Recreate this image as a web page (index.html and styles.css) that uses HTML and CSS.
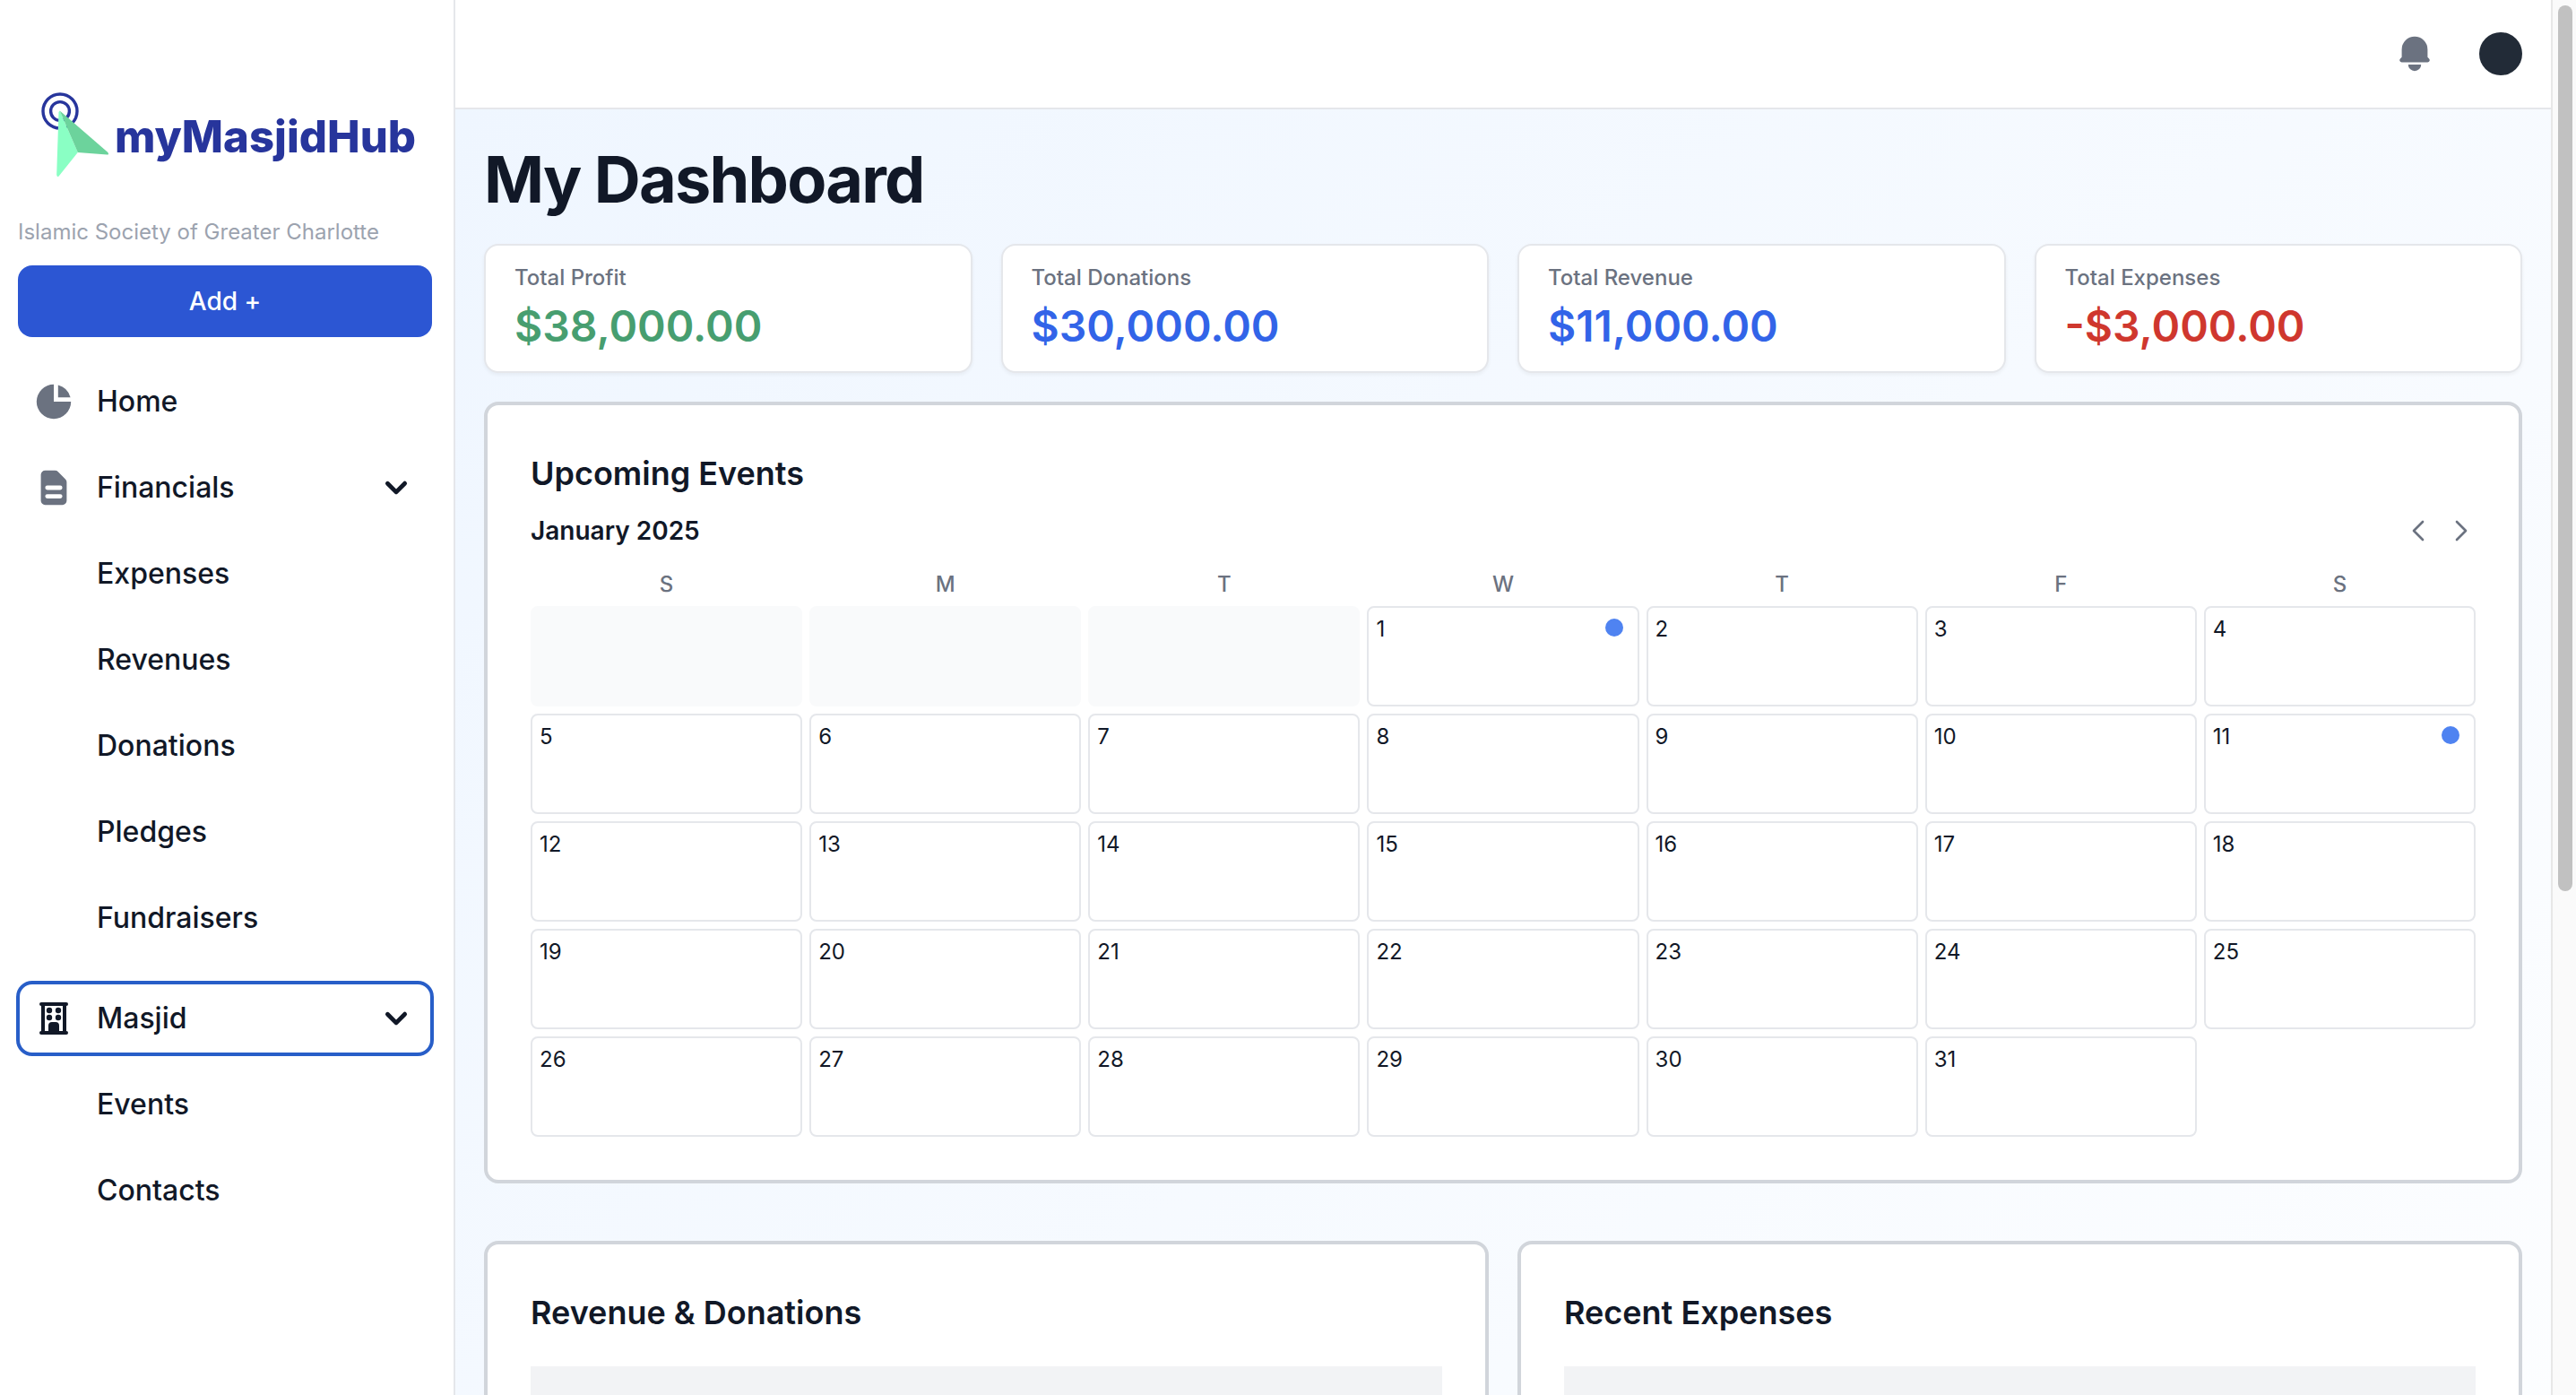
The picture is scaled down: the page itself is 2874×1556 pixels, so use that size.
FILE: index.html
```html
<!DOCTYPE html>
<html lang="en">
<head>
<meta charset="utf-8">
<meta name="viewport" content="width=device-width, initial-scale=1">
<title>My Dashboard - myMasjidHub</title>
<link rel="stylesheet" href="styles.css">
</head>
<body>
<div class="app">
  <aside class="sidebar">
    <a class="logo" href="#">
      <svg class="logo-mark" viewBox="0 0 78 102" fill="none" aria-hidden="true">
        <circle cx="21" cy="22" r="19" stroke="#27359c" stroke-width="3.4"/>
        <circle cx="21" cy="22" r="10.4" stroke="#27359c" stroke-width="3.4"/>
        <path d="M20.7 21.5L40.8 68 19.600 94.400Q17.300 96 17.200 92.800L19.500 23Z" fill="#8affc4"/>
        <path d="M20.700 21.500L74.400 68Q76 70.600 73.500 70.600L40.800 68Z" fill="#6cd39c"/>
      </svg>
      <span class="logo-text">myMasjidHub</span>
    </a>
    <p class="org">Islamic Society of Greater Charlotte</p>
    <button class="add" type="button">Add +</button>
    <nav aria-label="Main">
      <ul class="menu">
        <li><a class="item" href="#">
          <svg class="icon muted" viewBox="0 0 20 20" aria-hidden="true"><path d="M2 10a8 8 0 018-8v8h8a8 8 0 11-16 0z"/><path d="M12 2.252A8.014 8.014 0 0117.748 8H12V2.252z"/></svg>
          <span>Home</span></a></li>
        <li>
          <button class="item" type="button" aria-expanded="true">
            <svg class="icon muted" viewBox="0 0 20 20" aria-hidden="true"><path fill-rule="evenodd" clip-rule="evenodd" d="M4 4a2 2 0 012-2h4.586A2 2 0 0112 2.586L15.414 6A2 2 0 0116 7.414V16a2 2 0 01-2 2H6a2 2 0 01-2-2V4zm2 6a1 1 0 011-1h6a1 1 0 110 2H7a1 1 0 01-1-1zm1 3a1 1 0 100 2h6a1 1 0 100-2H7z"/></svg>
            <span class="grow">Financials</span>
            <svg class="icon" viewBox="0 0 20 20" aria-hidden="true"><path fill-rule="evenodd" d="M5.293 7.293a1 1 0 011.414 0L10 10.586l3.293-3.293a1 1 0 111.414 1.414l-4 4a1 1 0 01-1.414 0l-4-4a1 1 0 010-1.414z"/></svg>
          </button>
          <ul class="submenu">
            <li><a class="item sub" href="#">Expenses</a></li>
            <li><a class="item sub" href="#">Revenues</a></li>
            <li><a class="item sub" href="#">Donations</a></li>
            <li><a class="item sub" href="#">Pledges</a></li>
            <li><a class="item sub" href="#">Fundraisers</a></li>
          </ul>
        </li>
        <li>
          <button class="item focused" type="button" aria-expanded="true">
            <svg class="icon" viewBox="0 0 48 48" aria-hidden="true"><rect x="8" y="6" width="32" height="4" rx="2"/><rect x="8" y="38" width="32" height="4" rx="2"/><path d="M10 8h4v32h-4zM34 8h4v32h-4zM18 40v-8a4 4 0 014-4h4a4 4 0 014 4v8z"/><circle cx="19" cy="15" r="3.200"/><circle cx="29" cy="15" r="3.200"/><circle cx="19" cy="23" r="3.200"/><circle cx="29" cy="23" r="3.200"/></svg>
            <span class="grow">Masjid</span>
            <svg class="icon" viewBox="0 0 20 20" aria-hidden="true"><path fill-rule="evenodd" d="M5.293 7.293a1 1 0 011.414 0L10 10.586l3.293-3.293a1 1 0 111.414 1.414l-4 4a1 1 0 01-1.414 0l-4-4a1 1 0 010-1.414z"/></svg>
          </button>
          <ul class="submenu">
            <li><a class="item sub" href="#">Events</a></li>
            <li><a class="item sub" href="#">Contacts</a></li>
          </ul>
        </li>
      </ul>
    </nav>
  </aside>

  <div class="page">
    <header class="topbar">
      <button class="icon-button" type="button" aria-label="Notifications">
        <svg class="icon muted" viewBox="0 0 20 20" aria-hidden="true"><path d="M10 2a6 6 0 00-6 6v3.586l-.707.707A1 1 0 004 14h12a1 1 0 00.707-1.707L16 11.586V8a6 6 0 00-6-6zM10 18a3 3 0 01-3-3h6a3 3 0 01-3 3z"/></svg>
      </button>
      <button class="avatar" type="button" aria-label="Account"></button>
    </header>
    <main class="content">
      <h1>My Dashboard</h1>
      <section class="stats" aria-label="Totals">
        <div class="stat"><p class="stat-label">Total Profit</p><p class="stat-value green">$38,000.00</p></div>
        <div class="stat"><p class="stat-label">Total Donations</p><p class="stat-value blue">$30,000.00</p></div>
        <div class="stat"><p class="stat-label">Total Revenue</p><p class="stat-value blue">$11,000.00</p></div>
        <div class="stat"><p class="stat-label">Total Expenses</p><p class="stat-value red">-$3,000.00</p></div>
      </section>

      <section class="panel">
        <h2>Upcoming Events</h2>
        <div class="month">
          <h3>January 2025</h3>
          <div class="month-nav">
            <button class="icon-button" type="button" aria-label="Previous month"><svg class="arrow" viewBox="0 0 24 24" aria-hidden="true"><path d="M15.750 19.500L8.250 12l7.500-7.500"/></svg></button>
            <button class="icon-button" type="button" aria-label="Next month"><svg class="arrow" viewBox="0 0 24 24" aria-hidden="true"><path d="M8.250 4.500l7.500 7.500-7.500 7.500"/></svg></button>
          </div>
        </div>
        <table class="calendar">
          <thead><tr><th>S</th><th>M</th><th>T</th><th>W</th><th>T</th><th>F</th><th>S</th></tr></thead>
          <tbody>
            <tr><td class="blank"></td><td class="blank"></td><td class="blank"></td><td>1<span class="dot"></span></td><td>2</td><td>3</td><td>4</td></tr>
            <tr><td>5</td><td>6</td><td>7</td><td>8</td><td>9</td><td>10</td><td>11<span class="dot"></span></td></tr>
            <tr><td>12</td><td>13</td><td>14</td><td>15</td><td>16</td><td>17</td><td>18</td></tr>
            <tr><td>19</td><td>20</td><td>21</td><td>22</td><td>23</td><td>24</td><td>25</td></tr>
            <tr><td>26</td><td>27</td><td>28</td><td>29</td><td>30</td><td>31</td></tr>
          </tbody>
        </table>
      </section>

      <div class="pair">
        <section class="panel"><h2>Revenue &amp; Donations</h2><div class="placeholder"></div></section>
        <section class="panel"><h2>Recent Expenses</h2><div class="placeholder"></div></section>
      </div>
    </main>
  </div>

  <div class="scrollbar" aria-hidden="true"><div class="thumb"></div></div>
</div>
</body>
</html>
```

FILE: styles.css
```css
*, *::before, *::after { box-sizing: border-box; }

body {
  margin: 0;
  background: #fff;
  color: #111827;
  font: 400 24px/32px Inter, "Liberation Sans", sans-serif;
}

h1, h2, h3, p, ul { margin: 0; padding: 0; }
ul { list-style: none; }
a { color: inherit; text-decoration: none; }
button { margin: 0; padding: 0; border: 0; background: none; color: inherit; font: inherit; cursor: pointer; }
svg { display: block; flex: none; }

.app { display: flex; height: 100vh; overflow: hidden; }

/* Sidebar */
.sidebar {
  flex: none;
  width: 508px;
  padding: 102px 24px 32px 20px;
  border-right: 2px solid #e5e7eb;
  background: #fff;
}
.logo { display: flex; align-items: center; gap: 4px; padding-left: 26px; }
.logo-mark { width: 78px; height: 102px; }
.logo-text { color: #27359c; font-size: 49px; font-weight: 800; line-height: 64px; }
.org { margin: 39px 0 21px; color: #9ca3af; }
.add {
  width: 100%;
  height: 80px;
  border-radius: 16px;
  background: #2c56d3;
  color: #fff;
  font-size: 28px;
  font-weight: 500;
}
.menu { display: grid; gap: 16px; margin-top: 32px; }
.submenu { display: grid; gap: 16px; padding: 16px 0; }
.item {
  display: flex;
  align-items: center;
  gap: 24px;
  width: 100%;
  height: 80px;
  padding: 0 16px;
  border-radius: 16px;
  font-size: 32px;
  font-weight: 500;
  text-align: left;
}
.sub { padding-left: 88px; }
.focused { outline: 4px solid #285ec8; outline-offset: -2px; }
.grow { flex: 1; }
.icon { width: 48px; height: 48px; fill: currentColor; }
.muted { color: #6b7280; }

/* Page */
.page { flex: 1; min-width: 0; display: flex; flex-direction: column; }
.topbar {
  flex: none;
  display: flex;
  justify-content: flex-end;
  align-items: center;
  gap: 48px;
  padding: 36px 32px;
  border-bottom: 2px solid #e5e7eb;
  background: #fff;
}
.avatar { width: 48px; height: 48px; border-radius: 50%; background: #222b37; }
.content {
  flex: none;
  padding: 38px 32px 32px;
  background: linear-gradient(to bottom right, #eff6ff, #fff);
}
h1 { margin-bottom: 32px; font-size: 72px; font-weight: 700; line-height: 80px; letter-spacing: -0.025em; }
h2 { font-size: 36px; font-weight: 600; line-height: 56px; }
h3 { font-size: 28px; font-weight: 600; line-height: 40px; }

.stats { display: grid; grid-template-columns: repeat(4, 1fr); gap: 32px; margin-bottom: 32px; }
.stat {
  padding: 16px 32px;
  border: 2px solid #e5e7eb;
  border-radius: 16px;
  background: #fff;
  box-shadow: 0 2px 4px rgba(0, 0, 0, 0.05);
}
.stat-label { color: #6b7280; font-weight: 500; line-height: 40px; }
.stat-value { font-size: 48px; font-weight: 600; line-height: 68px; }
.green { color: #479e70; }
.blue { color: #3264e8; }
.red { color: #cf372e; }

.panel { padding: 48px; border: 4px solid #d1d5db; border-radius: 16px; background: #fff; }
.pair { display: grid; grid-template-columns: 1fr 1fr; gap: 32px; margin-top: 64px; }
.placeholder { height: 800px; margin-top: 32px; background: #f2f3f5; }

/* Calendar */
.month { display: flex; justify-content: space-between; align-items: center; margin: 16px 0 24px; }
.month-nav { display: flex; gap: 16px; }
.arrow { width: 32px; height: 32px; fill: none; stroke: #6b7280; stroke-width: 2; stroke-linecap: round; stroke-linejoin: round; }
.calendar, .calendar thead, .calendar tbody { display: grid; gap: 8px; }
.calendar tr { display: grid; grid-template-columns: repeat(7, 1fr); gap: 8px; }
.calendar th { padding: 0; color: #6b7280; font-weight: 500; text-align: center; }
.calendar td {
  display: flex;
  justify-content: space-between;
  height: 112px;
  padding: 8px;
  border: 2px solid #e5e7eb;
  border-radius: 8px;
}
.calendar .blank { border-color: #f9fafb; background: #f9fafb; }
.dot { width: 20px; height: 20px; margin: 4px 8px; border-radius: 50%; background: #4f83f1; }

/* Scrollbar */
.scrollbar { flex: none; width: 28px; padding: 6px 4px 6px 6px; border-left: 2px solid #e7e7e7; background: #fafafa; }
.thumb { height: 64%; border-radius: 8px; background: #c1c1c1; }
```
